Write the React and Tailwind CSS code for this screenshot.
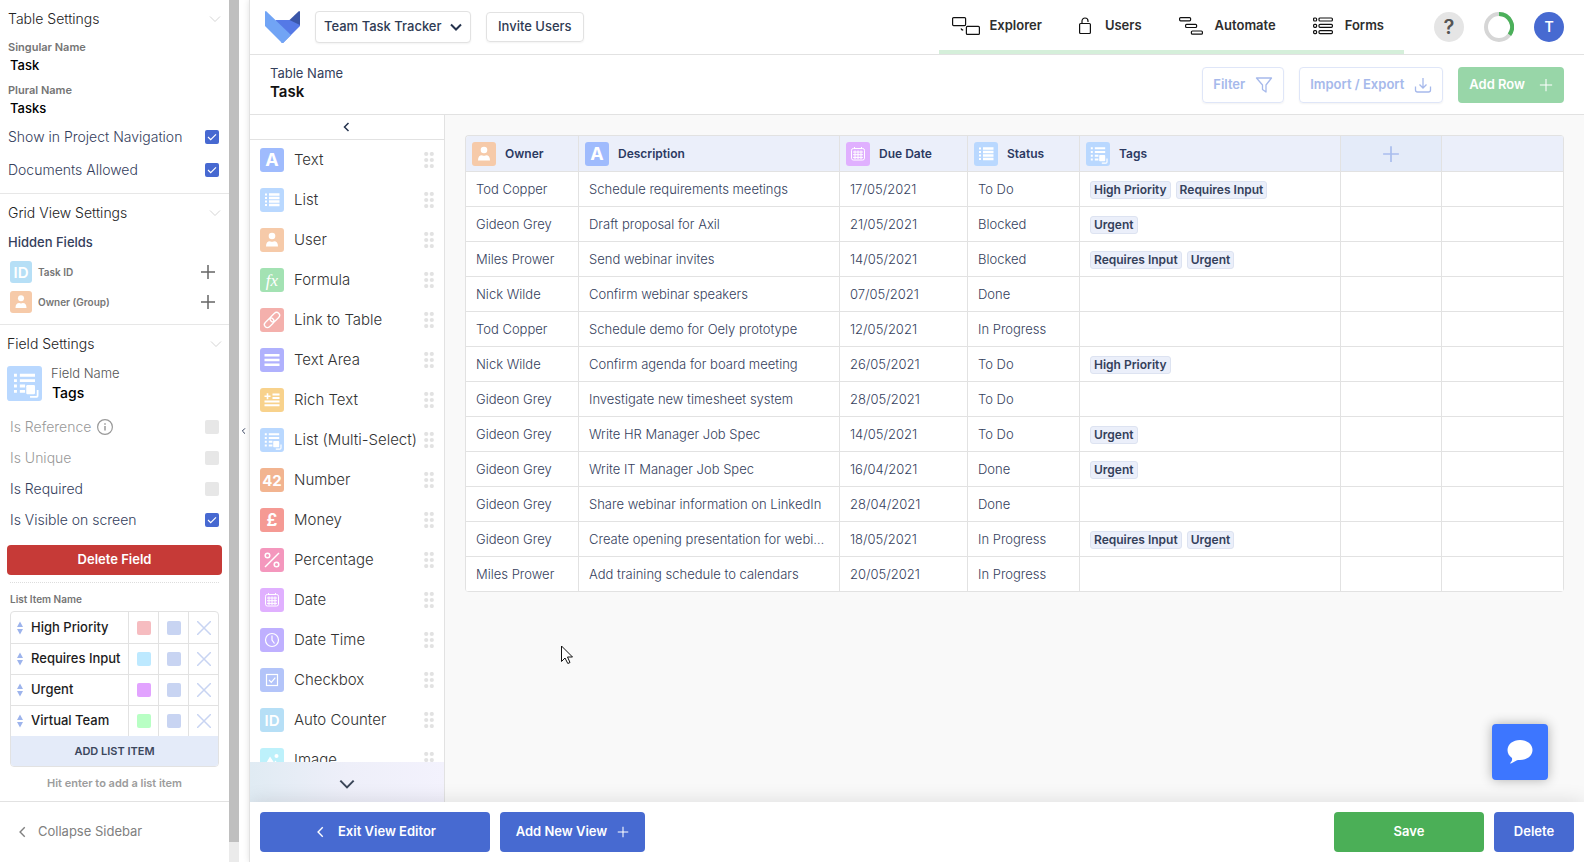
import React, { useState } from "react";

const fieldColors = {
  text: "bg-[#9fbbfd]",
  list: "bg-[#b9d8ff]",
  user: "bg-[#f6caa9]",
  formula: "bg-[#a3e2b3]",
  link: "bg-[#f4b0ac]",
  textarea: "bg-[#b0b1fd]",
  rich: "bg-[#f8d28c]",
  multi: "bg-[#b9d8ff]",
  number: "bg-[#f2b490]",
  money: "bg-[#f59a94]",
  percent: "bg-[#f497bd]",
  date: "bg-[#e0b0ff]",
  datetime: "bg-[#bfb0ff]",
  checkbox: "bg-[#b3c4f9]",
  id: "bg-[#b6dff6]",
  image: "bg-[#bdf1fb]",
};

// White drawings that sit on the coloured tiles
const fieldGlyphs = {
  list: (
    <g fill="#fff">
      <path d="M5 5.5h2v2H5zM5 9h2v2H5zM5 12.5h2v2H5zM5 16h2v2H5z" />
      <path d="M9 5.2h10.5v2.6H9zM9 8.7h10.5v2.6H9zM9 12.2h10.5v2.6H9zM9 15.7h10.5v2.6H9z" />
    </g>
  ),
  user: (
    <g fill="#fff">
      <circle cx="12" cy="8" r="3.3" />
      <path d="M6 18.6c0-3.6 1.4-5.4 4-5.4 1.2.7 2.8.7 4 0 2.6 0 4 1.8 4 5.4z" />
    </g>
  ),
  link: (
    <g fill="none" stroke="#fff" strokeWidth="1.3" transform="rotate(-45 12 12)">
      <rect x="2.5" y="9" width="11" height="6" rx="3" />
      <rect x="10.5" y="9" width="11" height="6" rx="3" />
    </g>
  ),
  textarea: (
    <path d="M4.5 6h15v2.4h-15zM4.5 10.8h15v2.4h-15zM4.5 15.6h15V18h-15z" fill="#fff" />
  ),
  rich: (
    <g fill="#fff">
      <path d="M4.5 7.5h6v1.6h-6zM6.7 5.3h1.6v6H6.7z" />
      <path d="M12.5 5.5h7v2h-7zM12.5 9h7v2h-7zM4.5 12.6h15v2h-15zM4.5 16.2h15v2h-15z" />
    </g>
  ),
  multi: (
    <g>
      <path
        d="M4.8 5.3h2v2h-2zM4.8 9h2v2h-2zM4.8 12.7h2v2h-2zM4.8 16.4h2v2h-2zM8.8 5.3h10.4v2H8.8zM8.8 9h10.4v2H8.8zM8.8 12.7h3.6v2H8.8zM8.8 16.4h3.6v2H8.8z"
        fill="#fff"
      />
      <rect x="13.2" y="13" width="6" height="6.3" rx=".8" fill="#fff" />
      <path d="M21 16.5v3.5q0 1.2-1.2 1.2h-4" fill="none" stroke="#fff" strokeWidth="1.2" />
    </g>
  ),
  percent: (
    <g fill="none" stroke="#fff" strokeWidth="1.5">
      <circle cx="7.5" cy="7.5" r="2.3" />
      <circle cx="16.5" cy="16.5" r="2.3" />
      <path d="M19 5 5 19" />
    </g>
  ),
  date: (
    <g fill="none" stroke="#fff" strokeWidth="1">
      <rect x="5.5" y="6.5" width="13" height="11.5" rx="1.8" />
      <path d="M8.5 5v2M15.5 5v2M7 10h10M7 12.7h10M7 15.4h10M9 8.5V17M12 8.5V17M15 8.5V17" />
    </g>
  ),
  datetime: (
    <g fill="none" stroke="#fff" strokeWidth="1.2">
      <circle cx="12" cy="12" r="6.5" />
      <path d="M12 7.5V12l2.5 3.5" />
    </g>
  ),
  checkbox: (
    <g fill="none" stroke="#fff" strokeWidth="1.2">
      <rect x="6.5" y="6.5" width="11" height="11" />
      <path d="m9 12 2.3 2.3 4-4.6" />
    </g>
  ),
  image: (
    <g fill="#fff">
      <circle cx="16.5" cy="8" r="2" />
      <path d="m4.5 18 5.5-9.5 4 6 1.5-2 4 5.5z" />
    </g>
  ),
};

function FieldIcon({ type, size = "h-6 w-6" }) {
  const tile = `${size} ${fieldColors[type]} shrink-0 rounded-[3px] flex items-center justify-center text-white leading-none`;
  if (type === "text") return <span className={`${tile} text-[18px] font-bold`}>A</span>;
  if (type === "number") return <span className={`${tile} text-[15px] font-bold`}>42</span>;
  if (type === "money") return <span className={`${tile} text-[17px] font-bold`}>£</span>;
  if (type === "id") return <span className={`${tile} text-[15px] font-semibold`}>ID</span>;
  if (type === "formula")
    return (
      <span className={`${tile} text-[17px] italic font-["Liberation_Serif",serif]`}>fx</span>
    );
  return (
    <span className={tile}>
      <svg viewBox="0 0 24 24" className="h-full w-full" aria-hidden="true">
        {fieldGlyphs[type]}
      </svg>
    </span>
  );
}

function Chevron({ d, className, width = 1.5 }) {
  return (
    <svg viewBox="0 0 12 12" className={className} fill="none" stroke="currentColor" strokeWidth={width} aria-hidden="true">
      <path d={d} />
    </svg>
  );
}

const LEFT = "M7.5 2 3.5 6l4 4";
const DOWN = "M1 3.500 6 8.500l5-5";

function Plus({ className, width = 1 }) {
  return (
    <svg viewBox="0 0 16 16" className={className} fill="none" stroke="currentColor" strokeWidth={width} aria-hidden="true">
      <path d="M8 1v14M1 8h14" />
    </svg>
  );
}

function SettingsHeading({ children }) {
  return (
    <div className="flex h-[38px] items-center justify-between text-sm text-[#222]">
      <h2 className="font-light">{children}</h2>
      <button type="button" aria-label={`Toggle ${children}`}>
        <Chevron d={DOWN} className="h-3 w-3 text-[#d5d5d5]" width={1} />
      </button>
    </div>
  );
}

function NameField({ id, label, value }) {
  return (
    <div className="flex flex-col">
      <label htmlFor={id} className="text-[11px] leading-4 font-semibold text-[#757575]">
        {label}
      </label>
      <input
        id={id}
        defaultValue={value}
        className="h-5 w-full pl-[2px] text-[13px] font-medium text-black outline-none"
      />
    </div>
  );
}

function CheckRow({ id, label, checked, disabled, info, className }) {
  const [on, setOn] = useState(!!checked);
  return (
    <div className={`flex items-center justify-between text-sm font-light ${className}`}>
      <label
        htmlFor={id}
        className={`flex items-center gap-1.5 ${disabled ? "text-[#999]" : "text-[#34405c]"}`}
      >
        {label}
        {info && (
          <svg viewBox="0 0 16 16" className="h-4 w-4" fill="none" stroke="#999" aria-hidden="true">
            <circle cx="8" cy="8" r="7.400" strokeWidth="1.200" />
            <path d="M8 7v4.500M8 4.300v1.400" strokeWidth="1.500" />
          </svg>
        )}
      </label>
      <span className="relative flex">
        <input
          id={id}
          type="checkbox"
          checked={on}
          disabled={disabled}
          onChange={() => setOn(!on)}
          className="h-3.5 w-3.5 appearance-none rounded-[2px] bg-[#e7e7e7] checked:bg-[#4769d1]"
        />
        {on && (
          <svg
            viewBox="0 0 14 14"
            className="pointer-events-none absolute inset-0 h-3.5 w-3.5"
            fill="none"
            stroke="#fff"
            strokeWidth="1.2"
            aria-hidden="true"
          >
            <path d="m3 7 2.700 2.700L11 4.300" />
          </svg>
        )}
      </span>
    </div>
  );
}

const hiddenFields = [
  { type: "id", name: "Task ID" },
  { type: "user", name: "Owner (Group)" },
];

const listItems = [
  { name: "High Priority", color: "bg-[#f6bcc0]" },
  { name: "Requires Input", color: "bg-[#bde9ff]" },
  { name: "Urgent", color: "bg-[#e2a3ff]" },
  { name: "Virtual Team", color: "bg-[#b8ffc4]" },
];

function ListItems() {
  return (
    <div className="overflow-hidden rounded border border-[#e2e2e2]">
      {listItems.map((item, i) => (
        <div
          key={item.name}
          className={`flex h-[31px] divide-x divide-[#e2e2e2] ${i > 0 ? "border-t border-[#e2e2e2]" : ""}`}
        >
          <div className="flex min-w-0 flex-1 items-center gap-2 pl-1.5">
            <svg viewBox="0 0 6 14" className="h-3.5 w-1.5 shrink-0" fill="#9db4ec" aria-hidden="true">
              <path d="M3 .5 6 6H0zM3 13.500 6 8H0z" />
            </svg>
            <input
              aria-label={`List item ${i + 1}`}
              defaultValue={item.name}
              className="w-full min-w-0 text-[13px] font-medium text-[#1c1c1c] outline-none"
            />
          </div>
          <button type="button" aria-label="Item colour" className="flex w-[30px] items-center justify-center">
            <span className={`h-3.5 w-3.5 rounded-[2px] ${item.color}`} />
          </button>
          <button type="button" aria-label="Text colour" className="flex w-[30px] items-center justify-center">
            <span className="h-3.5 w-3.5 rounded-[2px] bg-[#c8d4f2]" />
          </button>
          <button type="button" aria-label="Remove item" className="flex w-[29px] items-center justify-center">
            <svg viewBox="0 0 14 14" className="h-3.5 w-3.5" stroke="#c8d4f2" strokeWidth="1.5" aria-hidden="true">
              <path d="m0 0 14 14M14 0 0 14" />
            </svg>
          </button>
        </div>
      ))}
      <button type="button" className="h-[30px] w-full bg-[#e4ebf9] text-[11px] font-semibold text-[#3b465c]">
        ADD LIST ITEM
      </button>
    </div>
  );
}

function Sidebar() {
  return (
    <aside className="flex w-[239px] shrink-0">
      <div className="flex min-w-0 flex-1 flex-col">
        <div className="min-h-0 flex-1 overflow-hidden">
          <section className="border-b border-[#e7e7e7] px-2 pb-[7px]">
            <SettingsHeading>Table Settings</SettingsHeading>
            <div className="flex flex-col gap-[7px] pt-px pb-[2px]">
              <NameField id="singular" label="Singular Name" value="Task" />
              <NameField id="plural" label="Plural Name" value="Tasks" />
            </div>
            <CheckRow id="show-nav" label="Show in Project Navigation" checked className="h-[33px] pr-[2px]" />
            <CheckRow id="documents" label="Documents Allowed" checked className="h-[33px] pr-[2px]" />
          </section>

          <section className="border-b border-[#e7e7e7] px-2 pb-[7px]">
            <SettingsHeading>Grid View Settings</SettingsHeading>
            <h3 className="h-[25px] text-[13px] leading-5 font-medium text-[#34405c]">Hidden Fields</h3>
            <ul>
              {hiddenFields.map((field) => (
                <li key={field.name} className="flex h-[30px] items-center gap-1.5 pl-[2px] pr-[5px]">
                  <FieldIcon type={field.type} size="h-[22px] w-[22px]" />
                  <span className="flex-1 text-[10px] font-semibold text-[#757575]">{field.name}</span>
                  <button type="button" aria-label={`Show ${field.name}`}>
                    <Plus className="h-4 w-4 text-[#666]" width={1.5} />
                  </button>
                </li>
              ))}
            </ul>
          </section>

          <section className="px-[7px]">
            <SettingsHeading>Field Settings</SettingsHeading>
            <div className="flex h-[41px] items-center gap-[9px]">
              <FieldIcon type="multi" size="h-[35px] w-[35px]" />
              <div className="flex min-w-0 flex-1 flex-col pb-[2px]">
                <label htmlFor="field-name" className="text-[13px] leading-5 font-light text-[#555]">
                  Field Name
                </label>
                <input
                  id="field-name"
                  defaultValue="Tags"
                  className="h-5 w-full pl-px text-sm font-medium text-black outline-none"
                />
              </div>
            </div>
            <div className="px-[3px] pt-[7px] pb-2.5">
              <CheckRow id="is-reference" label="Is Reference" disabled info className="h-[31px]" />
              <CheckRow id="is-unique" label="Is Unique" disabled className="h-[31px]" />
              <CheckRow id="is-required" label="Is Required" className="h-[31px]" />
              <CheckRow id="is-visible" label="Is Visible on screen" checked className="h-[31px]" />
            </div>
            <button
              type="button"
              className="h-[30px] w-full rounded bg-[#c63a37] text-[13px] font-semibold text-white"
            >
              Delete Field
            </button>
            <div className="mx-[3px] mt-[7px] border-t border-dotted border-[#ddd] pt-2">
              <h3 className="mb-1 text-[10px] leading-4 font-semibold text-[#757575]">List Item Name</h3>
              <ListItems />
              <p className="mt-2 text-center text-[11px] leading-4 font-semibold text-[#9c9c9c]">
                Hit enter to add a list item
              </p>
            </div>
          </section>
        </div>
        <button
          type="button"
          className="flex h-[61px] shrink-0 items-center gap-2 border-t border-[#e2e2e2] pl-4 text-[13px] text-[#808080]"
        >
          <Chevron d={LEFT} className="h-3.5 w-3.5" width={1.2} />
          Collapse Sidebar
        </button>
      </div>
      <div className="w-2.5 bg-[#ebebeb] pb-5">
        <div className="h-full bg-[#bfbfbf]" />
      </div>
    </aside>
  );
}

// Outline icons of the top navigation
const navLinks = [
  {
    label: "Explorer",
    gap: "gap-[9px]",
    icon: (
      <svg viewBox="0 0 28 18" className="h-[18px] w-7" fill="none" stroke="#111" strokeWidth="1.2" aria-hidden="true">
        <rect x=".6" y=".6" width="13" height="8" rx="1" />
        <rect x="14.4" y="9.4" width="13" height="8" rx="1" />
        <path d="M9 11.500c.3 1 .9 1.500 2.200 1.700" />
      </svg>
    ),
  },
  {
    label: "Users",
    gap: "gap-3.5",
    icon: (
      <svg viewBox="0 0 12 18" className="h-[18px] w-3" fill="none" stroke="#111" strokeWidth="1.2" aria-hidden="true">
        <rect x=".6" y="6.500" width="10.8" height="10" rx="1" />
        <path d="M3 6.500V4a3 3 0 0 1 6 0v1" />
      </svg>
    ),
  },
  {
    label: "Automate",
    gap: "gap-3",
    icon: (
      <svg viewBox="0 0 24 18" className="h-[18px] w-6" fill="none" stroke="#111" strokeWidth="1.2" aria-hidden="true">
        <rect x=".6" y=".6" width="11" height="3.2" rx="1" />
        <rect x="6.6" y="7.3" width="11" height="3.2" rx="1" />
        <rect x="12.4" y="14" width="11" height="3.2" rx="1" />
      </svg>
    ),
  },
  {
    label: "Forms",
    gap: "gap-3",
    icon: (
      <svg viewBox="0 0 20 18" className="h-[18px] w-5" fill="none" stroke="#111" strokeWidth="1.2" aria-hidden="true">
        <rect x=".6" y="1" width="3" height="3" rx="1" />
        <rect x=".6" y="7.3" width="3" height="3" rx="1" />
        <rect x=".6" y="13.6" width="3" height="3" rx="1" />
        <rect x="6" y="1" width="13.4" height="3" rx="1" />
        <rect x="6" y="7.3" width="13.4" height="3" rx="1" />
        <rect x="6" y="13.6" width="13.4" height="3" rx="1" />
      </svg>
    ),
  },
];

function TopBar() {
  return (
    <header className="flex h-[55px] shrink-0 items-center border-b border-[#e2e2e2] pl-[15px] pr-5">
      <svg viewBox="0 0 35 32" className="h-8 w-[35px]" aria-hidden="true">
        <path d="M10.500 9H26l9 0v6L18.500 31.500q-1 1-2 0z" fill="#5579e6" />
        <path d="M1 0q-1 0-1 1v14l16.500 16.500q1 1 2 0L26 24z" fill="#71a4f5" />
        <path d="M24.500 9 34 0q1 0 1 1v13z" fill="#3a56a8" />
      </svg>
      <div className="relative ml-[15px]">
        <select
          aria-label="Project"
          className="h-8 w-[156px] appearance-none rounded border border-[#e2e2e2] bg-white pl-2 text-[13px] font-medium text-[#2f3b54] shadow-xs"
        >
          <option>Team Task Tracker</option>
        </select>
        <Chevron
          d={DOWN}
          width={2}
          className="pointer-events-none absolute top-2.5 right-[9px] h-3 w-3 text-[#24324d]"
        />
      </div>
      <button
        type="button"
        className="ml-[15px] h-[30px] rounded border border-[#e2e2e2] px-[11px] text-[13px] font-medium text-[#2f3b54] shadow-xs"
      >
        Invite Users
      </button>
      <nav className="ml-auto flex h-full items-center gap-[37px] border-b-4 border-[#d5efda] px-[13px] pt-[2px] pr-5 text-[13px] font-semibold text-[#2e2e2e]">
        {navLinks.map((link) => (
          <a key={link.label} href="#" className={`flex items-center ${link.gap}`}>
            {link.icon}
            {link.label}
          </a>
        ))}
      </nav>
      <div className="ml-[30px] flex items-center gap-5">
        <button
          type="button"
          aria-label="Help"
          className="flex h-[30px] w-[30px] items-center justify-center rounded-full bg-[#e5e5e5] text-xl font-semibold text-[#555]"
        >
          ?
        </button>
        <svg viewBox="0 0 30 30" className="h-[30px] w-[30px]" fill="none" strokeWidth="4" aria-hidden="true">
          <circle cx="15" cy="15" r="13" stroke="#d6d6d6" />
          <path d="M15 2a13 13 0 0 1 10.500 20.700" stroke="#4bb05a" />
        </svg>
        <button
          type="button"
          aria-label="Account"
          className="flex h-[30px] w-[30px] items-center justify-center rounded-full bg-[#476ad1] text-sm font-semibold text-white"
        >
          T
        </button>
      </div>
    </header>
  );
}

function ToolBar() {
  const outline =
    "flex h-9 items-center gap-2.5 rounded border border-[#dfe6f8] px-2.5 text-[13px] font-semibold text-[#a6b9eb] shadow-xs";
  return (
    <div className="flex h-[60px] shrink-0 items-center border-b border-[#e2e2e2] px-5">
      <div className="flex flex-1 flex-col pb-1">
        <label htmlFor="table-name" className="text-[13px] leading-5 text-[#34405c]">
          Table Name
        </label>
        <input
          id="table-name"
          defaultValue="Task"
          className="h-5 w-60 text-[15px] font-semibold text-[#111] outline-none"
        />
      </div>
      <div className="flex gap-[15px]">
        <button type="button" className={outline}>
          Filter
          <svg viewBox="0 0 18 18" className="h-[18px] w-[18px]" fill="none" stroke="currentColor" strokeWidth="1.3" strokeLinejoin="round" aria-hidden="true">
            <path d="M1.500 2h15L11 9v7l-3.500-2.500V9z" />
          </svg>
        </button>
        <button type="button" className={outline}>
          Import / Export
          <svg viewBox="0 0 18 18" className="h-[18px] w-[18px]" fill="none" stroke="currentColor" strokeWidth="1.3" aria-hidden="true">
            <path d="M9 2v10M5.500 8.500 9 12l3.500-3.500M1.500 10.500V14q0 2 2 2h11q2 0 2-2v-3.500" />
          </svg>
        </button>
        <button
          type="button"
          className="flex h-9 items-center gap-3.5 rounded bg-[#98d6a8] px-[11px] text-[13px] font-semibold text-white"
        >
          Add Row
          <Plus className="h-3.5 w-3.5" width={1.2} />
        </button>
      </div>
    </div>
  );
}

const palette = [
  ["text", "Text"],
  ["list", "List"],
  ["user", "User"],
  ["formula", "Formula"],
  ["link", "Link to Table"],
  ["textarea", "Text Area"],
  ["rich", "Rich Text"],
  ["multi", "List (Multi-Select)"],
  ["number", "Number"],
  ["money", "Money"],
  ["percent", "Percentage"],
  ["date", "Date"],
  ["datetime", "Date Time"],
  ["checkbox", "Checkbox"],
  ["id", "Auto Counter"],
  ["image", "Image"],
];

function FieldPalette() {
  return (
    <div className="flex w-[195px] shrink-0 flex-col border-r border-[#e2e2e2] bg-white">
      <button
        type="button"
        aria-label="Hide fields"
        className="flex h-[25px] shrink-0 items-center justify-center border-b border-[#e2e2e2] text-[#24324d]"
      >
        <Chevron d={LEFT} className="h-3 w-3" />
      </button>
      <ul className="min-h-0 flex-1 overflow-hidden">
        {palette.map(([type, label]) => (
          <li key={type} draggable className="flex h-10 cursor-grab items-center justify-between px-2.5">
            <div className="flex w-36 shrink-0 items-center gap-2.5">
              <FieldIcon type={type} />
              <span className="text-[15px] font-light whitespace-nowrap text-[#333]">{label}</span>
            </div>
            <svg viewBox="0 0 10 16" className="h-4 w-2.5 shrink-0" fill="#e2e2e2" aria-hidden="true">
              <circle cx="2.2" cy="2" r="2.1" />
              <circle cx="7.8" cy="2" r="2.1" />
              <circle cx="2.2" cy="8" r="2.1" />
              <circle cx="7.8" cy="8" r="2.1" />
              <circle cx="2.2" cy="14" r="2.1" />
              <circle cx="7.8" cy="14" r="2.1" />
            </svg>
          </li>
        ))}
      </ul>
      <button
        type="button"
        aria-label="Scroll fields"
        className="flex h-10 shrink-0 items-center justify-center bg-gradient-to-r from-[#e0ebf3] via-[#eeeff9] to-[#f3f2fd] pt-1 text-[#3a4557]"
      >
        <Chevron d={DOWN} className="h-4 w-4" />
      </button>
    </div>
  );
}

const columns = [
  { type: "user", name: "Owner", width: "w-[113px]" },
  { type: "text", name: "Description", width: "w-[261px]" },
  { type: "date", name: "Due Date", width: "w-[128px]" },
  { type: "list", name: "Status", width: "w-[112px]" },
  { type: "multi", name: "Tags", width: "w-[261px]" },
];

const rows = [
  ["Tod Copper", "Schedule requirements meetings", "17/05/2021", "To Do", ["High Priority", "Requires Input"]],
  ["Gideon Grey", "Draft proposal for Axil", "21/05/2021", "Blocked", ["Urgent"]],
  ["Miles Prower", "Send webinar invites", "14/05/2021", "Blocked", ["Requires Input", "Urgent"]],
  ["Nick Wilde", "Confirm webinar speakers", "07/05/2021", "Done", []],
  ["Tod Copper", "Schedule demo for Oely prototype", "12/05/2021", "In Progress", []],
  ["Nick Wilde", "Confirm agenda for board meeting", "26/05/2021", "To Do", ["High Priority"]],
  ["Gideon Grey", "Investigate new timesheet system", "28/05/2021", "To Do", []],
  ["Gideon Grey", "Write HR Manager Job Spec", "14/05/2021", "To Do", ["Urgent"]],
  ["Gideon Grey", "Write IT Manager Job Spec", "16/04/2021", "Done", ["Urgent"]],
  ["Gideon Grey", "Share webinar information on LinkedIn", "28/04/2021", "Done", []],
  ["Gideon Grey", "Create opening presentation for webinar", "18/05/2021", "In Progress", ["Requires Input", "Urgent"]],
  ["Miles Prower", "Add training schedule to calendars", "20/05/2021", "In Progress", []],
];

function TaskTable() {
  const cell = "border-r border-b border-[#e2e2e2]";
  return (
    <div className="overflow-hidden rounded border-t border-l border-[#e2e2e2]">
      <table className="w-full table-fixed border-separate border-spacing-0">
        <thead>
          <tr className="h-9 bg-[#ebeffa] text-left text-xs text-[#2c3a62]">
            {columns.map((col) => (
              <th key={col.name} className={`${cell} ${col.width} pl-1.5 font-semibold`}>
                <div className="flex items-center gap-[9px]">
                  <FieldIcon type={col.type} />
                  {col.name}
                </div>
              </th>
            ))}
            <th className={`${cell} w-[101px] bg-[#e4ebf9]`}>
              <button type="button" aria-label="Add column" className="mx-auto block">
                <Plus className="h-[18px] w-[18px] text-[#a9bdee]" width={1.5} />
              </button>
            </th>
            <th className={cell} />
          </tr>
        </thead>
        <tbody className="text-[13px] font-light text-[#34405c]">
          {rows.map(([owner, description, due, status, tags], i) => (
            <tr key={i} className="h-[35px] bg-white">
              {[owner, description, due, status].map((value, j) => (
                <td key={j} className={`${cell} truncate px-2.5 pt-[2px]`}>
                  {value}
                </td>
              ))}
              <td className={`${cell} px-2.5 pt-[2px]`}>
                <div className="flex gap-[5px]">
                  {tags.map((tag) => (
                    <span
                      key={tag}
                      className="h-[18px] rounded-[3px] border border-[#dde3f1] bg-[#ebeffa] px-[3px] text-xs leading-4 font-semibold text-[#34405a]"
                    >
                      {tag}
                    </span>
                  ))}
                </div>
              </td>
              <td className={cell} />
              <td className={cell} />
            </tr>
          ))}
        </tbody>
      </table>
    </div>
  );
}

function FooterBar() {
  const button = "flex h-10 items-center justify-center rounded text-[13px] font-semibold text-white";
  return (
    <footer className="relative flex h-[60px] shrink-0 items-center gap-2.5 bg-white px-2.5 shadow-[0_0_20px_rgba(0,0,0,0.12)]">
      <button type="button" className={`${button} w-[230px] gap-2.5 bg-[#476ad1]`}>
        <Chevron d={LEFT} className="h-3.5 w-3.5" width={1.2} />
        Exit View Editor
      </button>
      <button type="button" className={`${button} w-[145px] gap-2.5 bg-[#476ad1]`}>
        Add New View
        <Plus className="h-3 w-3" width={1.4} />
      </button>
      <button type="button" className={`${button} ml-auto w-[150px] bg-[#4baf57]`}>
        Save
      </button>
      <button type="button" className={`${button} w-20 bg-[#476ad1]`}>
        Delete
      </button>
    </footer>
  );
}

function App() {
  return (
    <div className='flex h-screen overflow-hidden bg-white font-["Inter",sans-serif]'>
      <Sidebar />
      <button
        type="button"
        aria-label="Collapse sidebar"
        className="flex w-2.5 shrink-0 items-center justify-center text-[#34405c]"
      >
        <Chevron d={LEFT} className="h-2 w-2" />
      </button>
      <div className="flex min-w-0 flex-1 flex-col overflow-hidden border-l border-[#e2e2e2] shadow-[0_0_6px_rgba(0,0,0,0.12)]">
        <TopBar />
        <ToolBar />
        <div className="flex min-h-0 flex-1">
          <FieldPalette />
          <main className="min-w-0 flex-1 bg-[#f9f9f9] p-5">
            <TaskTable />
          </main>
        </div>
        <FooterBar />
      </div>

      <button
        type="button"
        aria-label="Chat"
        className="fixed right-9 bottom-[82px] flex h-14 w-14 items-center justify-center rounded bg-[#3d76ff] shadow-[0_0_12px_rgba(0,0,0,0.3)]"
      >
        <svg viewBox="0 0 26 24" className="h-6 w-[26px]" fill="#fff" aria-hidden="true">
          <path d="M13 0c7 0 12.500 4.300 12.500 10S20 20 13 20c-1.200 0-2 0-3 .3L3.500 23.800Q2.800 23 4 22c1-1 1.300-2.300 1-4C2 16 .5 13.300.5 10 .5 4.300 6 0 13 0z" />
        </svg>
      </button>

      {/* Mouse pointer */}
      <svg
        viewBox="0 0 12 19"
        className="pointer-events-none absolute top-[645px] left-[561px] h-[19px] w-3"
        fill="#fff"
        stroke="#111"
        aria-hidden="true"
      >
        <path d="M.5 1v15.500L4 13l2.800 5.500 2.200-1-2.500-5.500h5z" />
      </svg>
    </div>
  );
}

export default App;
